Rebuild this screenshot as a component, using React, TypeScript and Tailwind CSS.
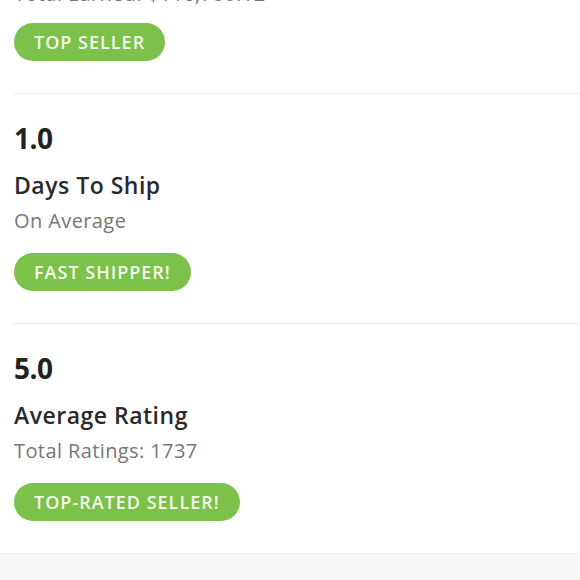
import React from "react";

const font = { fontFamily: '"Open Sans", "Noto Sans", sans-serif' };

function Pill({ label, top }: { label: string; top: string }) {
  return (
    <div className={`${top} flex`}>
      <span className="inline-flex h-[38px] items-center rounded-full bg-[#7cc14a] px-[20px] text-[18px] font-semibold uppercase tracking-[1px] text-[#f4faee]">
        {label}
      </span>
    </div>
  );
}

function Section({
  value,
  title,
  subtitle,
  badge,
}: {
  value: string;
  title: string;
  subtitle: string;
  badge: string;
}) {
  return (
    <div className="ml-[14px] border-t border-[#ececec] pt-[27px] pb-[32px]">
      <div className="text-[28px] font-bold leading-[34px] tracking-[-0.5px] text-[#222]">{value}</div>
      <div className="mt-[16px] text-[23px] font-semibold leading-[28px] tracking-[0.5px] text-[#2a2a2a]">{title}</div>
      <div className="mt-[9px] text-[20px] leading-[26px] tracking-[0.4px] text-[#777]">{subtitle}</div>
      <Pill label={badge} top="mt-[19px]" />
    </div>
  );
}

export default function App() {
  return (
    <div className="h-[580px] w-[580px] overflow-hidden bg-white" style={font}>
      <div className="ml-[14px] mt-[-19px] pb-[32px]">
        <div className="text-[20px] leading-[26px] tracking-[0.4px] text-[#777]">Total Earned: $116,780.12</div>
        <Pill label="Top Seller" top="mt-[16px]" />
      </div>
      <Section value="1.0" title="Days To Ship" subtitle="On Average" badge="Fast Shipper!" />
      <Section value="5.0" title="Average Rating" subtitle="Total Ratings: 1737" badge="Top-Rated Seller!" />
      <div className="h-[60px] border-t border-[#f0f0f0] bg-[#f8f8f8]" />
    </div>
  );
}
